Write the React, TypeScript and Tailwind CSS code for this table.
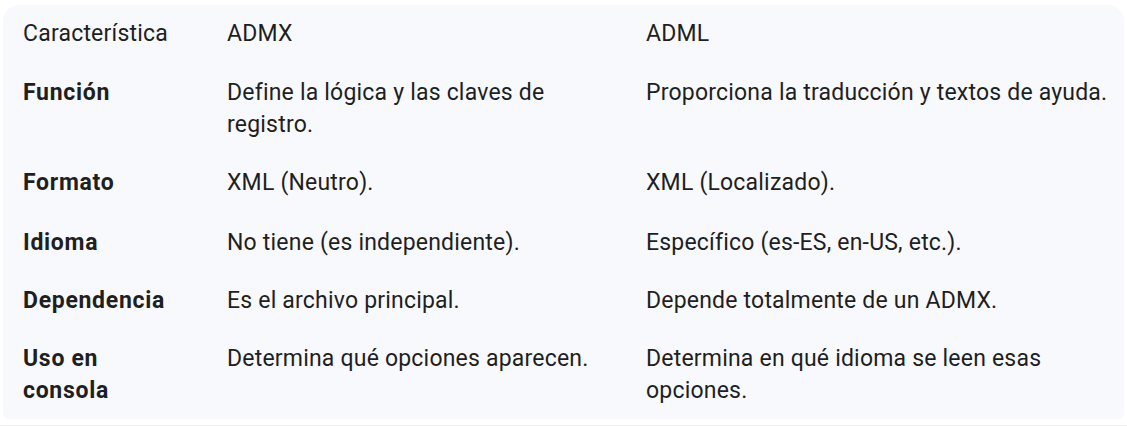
import React from 'react';

const rows: { k: string; a: string; b: string; pad: string }[] = [
  { k: 'Función', a: 'Define la lógica y las claves de registro.', b: 'Proporciona la traducción y textos de ayuda.', pad: 'pt-[13px] pb-[13px]' },
  { k: 'Formato', a: 'XML (Neutro).', b: 'XML (Localizado).', pad: 'pt-[13px] pb-[14px]' },
  { k: 'Idioma', a: 'No tiene (es independiente).', b: 'Específico (es-ES, en-US, etc.).', pad: 'pt-[14px] pb-[12px]' },
  { k: 'Dependencia', a: 'Es el archivo principal.', b: 'Depende totalmente de un ADMX.', pad: 'pt-[14px] pb-[12px]' },
  { k: 'Uso en consola', a: 'Determina qué opciones aparecen.', b: 'Determina en qué idioma se leen esas opciones.', pad: 'pt-[14px] pb-[12px]' },
];

export default function App() {
  return (
    <div className="w-[1127px] h-[427px] bg-white pt-[5px] px-[3px] font-['Roboto',sans-serif] text-[#1f1f1f]">
      <div className="bg-[#f8f9fc] rounded-t-2xl rounded-b-md text-[23px] leading-[32px] tracking-[0.2px]">
        <table className="w-full border-collapse table-fixed">
          <colgroup>
            <col className="w-[204px]" />
            <col className="w-[419px]" />
            <col />
          </colgroup>
          <thead>
            <tr>
              <th className="text-left font-normal pl-5 pr-8 pt-[13px] pb-[14px]">Característica</th>
              <th className="text-left font-normal pl-5 pr-4 pt-[13px] pb-[14px]">ADMX</th>
              <th className="text-left font-normal pl-5 pr-2 pt-[13px] pb-[14px]">ADML</th>
            </tr>
          </thead>
          <tbody>
            {rows.map((r) => (
              <tr key={r.k}>
                <td className={`align-top font-bold tracking-[0.7px] pl-5 pr-6 ${r.pad}`}>{r.k}</td>
                <td className={`align-top pl-5 pr-4 ${r.pad}`}>{r.a}</td>
                <td className={`align-top pl-5 pr-2 ${r.pad}`}>{r.b}</td>
              </tr>
            ))}
          </tbody>
        </table>
      </div>
      <div className="mt-[6px] -mx-[3px] h-px bg-[#eceef1]" />
    </div>
  );
}
